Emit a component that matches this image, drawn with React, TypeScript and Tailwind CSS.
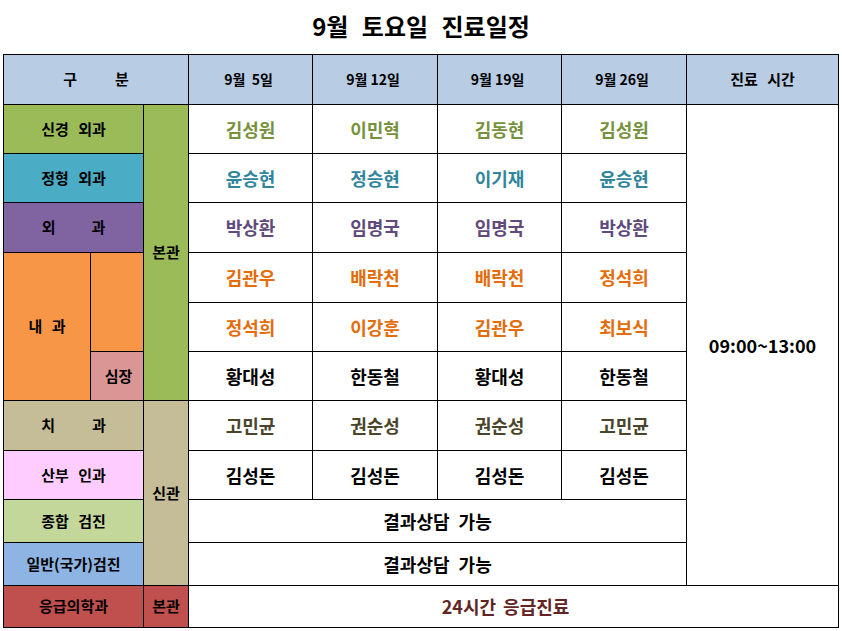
import React from "react";

type Row = { dept: string; names: string[]; color: string };

const dates = ["9월  5일", "9월 12일", "9월 19일", "9월 26일"];

const rows: Row[] = [
  { dept: "신경", names: ["김성원", "이민혁", "김동현", "김성원"], color: "text-[#76923c]" },
  { dept: "정형", names: ["윤승현", "정승현", "이기재", "윤승현"], color: "text-[#31859c]" },
  { dept: "외과", names: ["박상환", "임명국", "임명국", "박상환"], color: "text-[#604a7b]" },
  { dept: "내과1", names: ["김관우", "배락천", "배락천", "정석희"], color: "text-[#e46c0a]" },
  { dept: "내과2", names: ["정석희", "이강훈", "김관우", "최보식"], color: "text-[#e46c0a]" },
  { dept: "심장", names: ["황대성", "한동철", "황대성", "한동철"], color: "text-black" },
  { dept: "치과", names: ["고민균", "권순성", "권순성", "고민균"], color: "text-[#4a452a]" },
  { dept: "산부", names: ["김성돈", "김성돈", "김성돈", "김성돈"], color: "text-black" },
];

const cell = "flex items-center justify-center font-bold";
const label = `${cell} text-[15px] text-black [word-spacing:6px]`;

function Names({ row }: { row: Row }) {
  return (
    <>
      {row.names.map((n, i) => (
        <div key={i} className={`${cell} bg-white text-[18px] ${row.color}`}>
          {n}
        </div>
      ))}
    </>
  );
}

export default function App() {
  return (
    <div className="min-h-[631px] w-[842px] bg-white font-['Noto_Sans_CJK_KR',sans-serif] text-black">
      {/* title */}
      <div className="flex h-[52px] items-center justify-center text-[24px] font-bold [word-spacing:8px]">
        9월 토요일 진료일정
      </div>

      {/* schedule table */}
      <div className="ml-[3px] mt-[2px] grid w-fit grid-cols-[86px_52px_44px_123px_124px_123px_124px_151px] grid-rows-[49px_48px_48px_49px_49px_48px_48px_49px_48px_42px_42px_41px] gap-px bg-black p-px">
        {/* header */}
        <div className={`${label} col-span-3 gap-[38px] bg-[#b8cce4]`}>
          <span>구</span>
          <span>분</span>
        </div>
        {dates.map((d) => (
          <div key={d} className={`${cell} whitespace-pre bg-[#b8cce4] pr-[4px] text-[14px]`}>
            {d}
          </div>
        ))}
        <div className={`${label} bg-[#b8cce4] text-[14px]`}>진료 시간</div>

        {/* 신경 외과 */}
        <div className={`${label} col-span-2 bg-[#9bbb59]`}>신경 외과</div>
        <div className={`${label} row-span-6 bg-[#9bbb59]`}>본관</div>
        <Names row={rows[0]} />
        <div className={`${cell} row-span-10 bg-white text-[18px]`}>09:00~13:00</div>

        {/* 정형 외과 */}
        <div className={`${label} col-span-2 bg-[#4bacc6]`}>정형 외과</div>
        <Names row={rows[1]} />

        {/* 외과 */}
        <div className={`${label} col-span-2 gap-[36px] bg-[#8064a2]`}>
          <span>외</span>
          <span>과</span>
        </div>
        <Names row={rows[2]} />

        {/* 내과 */}
        <div className={`${label} row-span-3 bg-[#f79646]`}>내 과</div>
        <div className="row-span-2 bg-[#f79646]" />
        <Names row={rows[3]} />
        <Names row={rows[4]} />
        <div className={`${label} bg-[#da9694] pl-[3px]`}>심장</div>
        <Names row={rows[5]} />

        {/* 치과 */}
        <div className={`${label} col-span-2 gap-[37px] bg-[#c4bd97]`}>
          <span>치</span>
          <span>과</span>
        </div>
        <div className={`${label} row-span-4 bg-[#c4bd97]`}>신관</div>
        <Names row={rows[6]} />

        {/* 산부 인과 */}
        <div className={`${label} col-span-2 bg-[#ffccff]`}>산부 인과</div>
        <Names row={rows[7]} />

        {/* 검진 */}
        <div className={`${label} col-span-2 bg-[#c4d79b]`}>종합 검진</div>
        <div className={`${cell} col-span-4 bg-white text-[18px] [word-spacing:5px]`}>결과상담 가능</div>
        <div className={`${label} col-span-2 bg-[#8db4e2]`}>일반(국가)검진</div>
        <div className={`${cell} col-span-4 bg-white text-[18px] [word-spacing:5px]`}>결과상담 가능</div>

        {/* 응급 */}
        <div className={`${label} col-span-2 bg-[#c0504d]`}>응급의학과</div>
        <div className={`${label} bg-[#c0504d]`}>본관</div>
        <div className={`${cell} col-span-5 bg-white pr-[16px] text-[18px] text-[#632523] [word-spacing:3px]`}>
          24시간 응급진료
        </div>
      </div>
    </div>
  );
}
